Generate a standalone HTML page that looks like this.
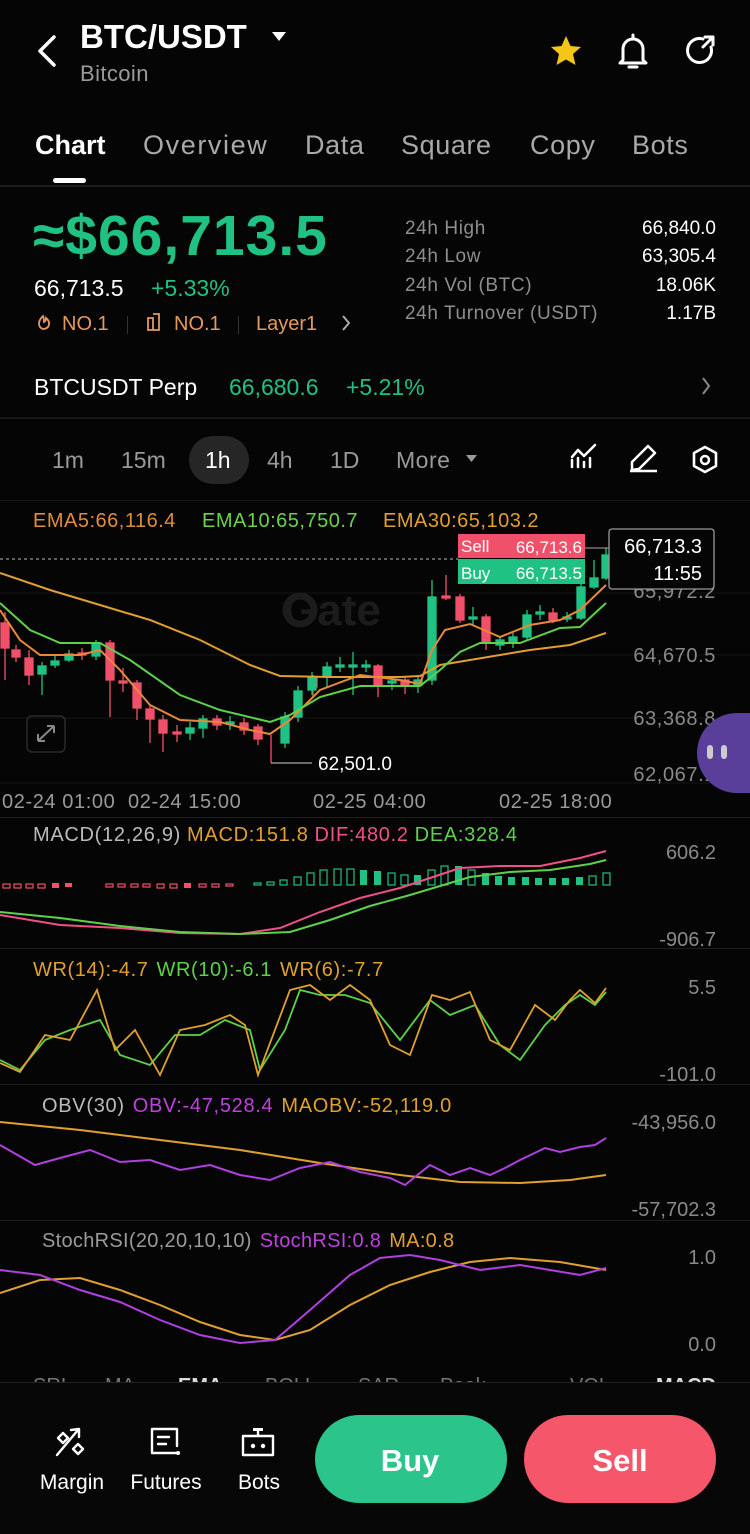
<!DOCTYPE html>
<html><head><meta charset="utf-8"><style>
html,body{margin:0;padding:0;background:#050505;width:750px;height:1534px;overflow:hidden}
svg{display:block}
text{font-family:"Liberation Sans",sans-serif}
</style></head><body>
<svg width="750" height="1534" viewBox="0 0 750 1534" xmlns="http://www.w3.org/2000/svg">
<rect width="750" height="1534" fill="#050505"/>
<!-- header -->
<path d="M54 37 L40 51 L54 65" stroke="#fff" stroke-width="3.5" fill="none" stroke-linecap="round" stroke-linejoin="round"/>
<text x="80" y="48" fill="#fff" font-size="33" font-weight="bold">BTC/USDT</text>
<path d="M272 32 L286 32 L279 41 Z" fill="#fff"/>
<text x="80" y="81" fill="#9a9a9a" font-size="22" letter-spacing="0.4">Bitcoin</text>
<path d="M566 36 L570.5 46 L581 47 L573 54 L575.5 65 L566 59.5 L556.5 65 L559 54 L551 47 L561.5 46 Z" fill="#f5c518"/>
<path d="M623 60 L623 49 A10 10 0 0 1 643 49 L643 60 L646 63 L620 63 Z M629 67 L637 67" stroke="#fff" stroke-width="3" fill="none" stroke-linejoin="round" stroke-linecap="round"/>
<line x1="633" y1="35" x2="633" y2="38" stroke="#fff" stroke-width="3" stroke-linecap="round"/>
<path d="M711 47 A12 12 0 1 1 703 39" stroke="#fff" stroke-width="3" fill="none" stroke-linecap="round"/>
<path d="M703 47 L713 37 M705 37 L713 37 L713 45" stroke="#fff" stroke-width="3" fill="none" stroke-linecap="round" stroke-linejoin="round"/>
<!-- tabs -->
<g font-size="27" fill="#a9a9a9" letter-spacing="0.6">
<text x="35" y="154" fill="#fff" font-weight="bold" letter-spacing="0">Chart</text>
<text x="143" y="154" letter-spacing="1.6">Overview</text>
<text x="305" y="154">Data</text>
<text x="401" y="154">Square</text>
<text x="530" y="154">Copy</text>
<text x="632" y="154">Bots</text>
</g>
<rect x="53" y="178" width="33" height="5" rx="2.5" fill="#fff"/>
<rect x="0" y="185" width="750" height="2" fill="#1c1c1c"/>
<!-- price -->
<text x="33" y="255" fill="#1fc283" font-size="57" font-weight="bold" letter-spacing="1">≈$66,713.5</text>
<text x="34" y="296" fill="#fff" font-size="23">66,713.5</text>
<text x="151" y="296" fill="#1fc283" font-size="23">+5.33%</text>
<g fill="#e39a5c" font-size="20">
<path d="M43 316 q-6 6 -3 11 q3 4 8 0 q3 -5 -2 -9 q0 3 -2 4 q0 -4 -1 -6z" stroke="#e39a5c" stroke-width="1.8" fill="none"/>
<text x="62" y="330">NO.1</text>
<rect x="127" y="316" width="1" height="18" fill="#333"/>
<path d="M148 318 h5 v12 h-5 z M153 314 h6 v16 h-6" stroke="#e39a5c" stroke-width="1.8" fill="none"/>
<text x="174" y="330">NO.1</text>
<rect x="238" y="316" width="1" height="18" fill="#333"/>
<text x="256" y="330">Layer1</text>
</g>
<path d="M343 316 L349 323 L343 330" stroke="#aaa" stroke-width="2" fill="none"/>
<g font-size="19" fill="#8e8e8e" letter-spacing="0.6">
<text x="405" y="234">24h  High</text>
<text x="405" y="262">24h  Low</text>
<text x="405" y="291">24h  Vol (BTC)</text>
<text x="405" y="319">24h  Turnover (USDT)</text>
</g>
<g font-size="19" fill="#fff" text-anchor="end">
<text x="716" y="234">66,840.0</text>
<text x="716" y="262">63,305.4</text>
<text x="716" y="291">18.06K</text>
<text x="716" y="319">1.17B</text>
</g>
<text x="34" y="395" fill="#fff" font-size="23">BTCUSDT Perp</text>
<text x="229" y="395" fill="#1fc283" font-size="23">66,680.6</text>
<text x="346" y="395" fill="#1fc283" font-size="23">+5.21%</text>
<path d="M703 378 L709 386 L703 394" stroke="#888" stroke-width="2" fill="none"/>
<rect x="0" y="417" width="750" height="2" fill="#161616"/>
<!-- timeframe -->
<rect x="189" y="436" width="60" height="48" rx="24" fill="#262626"/>
<g font-size="23" fill="#9a9a9a">
<text x="52" y="468">1m</text>
<text x="121" y="468">15m</text>
<text x="205" y="468" fill="#fff">1h</text>
<text x="267" y="468">4h</text>
<text x="330" y="468">1D</text>
<text x="396" y="468" letter-spacing="0.5">More</text>
</g>
<path d="M466 455 L477 455 L471.5 462 Z" fill="#9a9a9a"/>
<path d="M572 467 L572 460 M578 467 L578 458 M584 467 L584 462 M590 467 L590 458 M572 457 L578 450 L584 456 L595 445" stroke="#fff" stroke-width="2.5" fill="none" stroke-linecap="round" stroke-linejoin="round"/>
<path d="M632 470 L632 462 L648 446 L655 453 L639 469 Z M630 471 L657 471" stroke="#fff" stroke-width="2.5" fill="none" stroke-linejoin="round"/>
<path d="M705 447 L716 453 L716 466 L705 472 L694 466 L694 453 Z" stroke="#fff" stroke-width="2.6" fill="none" stroke-linejoin="round"/>
<circle cx="705" cy="460" r="4" stroke="#fff" stroke-width="2.5" fill="none"/>
<rect x="0" y="500" width="750" height="1" fill="#161616"/>
<!-- main chart -->
<g stroke="#151515" stroke-width="1">
<line x1="0" y1="593" x2="750" y2="593"/><line x1="0" y1="655" x2="750" y2="655"/><line x1="0" y1="718" x2="750" y2="718"/><line x1="0" y1="783" x2="750" y2="783"/>
</g>
<text x="283" y="625" fill="#1c1c1c" font-size="44" font-weight="bold">Gate</text>
<circle cx="300" cy="610" r="14" stroke="#1c1c1c" stroke-width="7" fill="none"/>
<g font-size="20" letter-spacing="0.5">
<text x="33" y="527" fill="#e08c3c">EMA5:66,116.4</text>
<text x="202" y="527" fill="#6bd24a">EMA10:65,750.7</text>
<text x="383" y="527" fill="#e0a030">EMA30:65,103.2</text>
</g>
<g font-size="20" fill="#8a8a8a" text-anchor="end" letter-spacing="0.6">
<text x="716" y="598">65,972.2</text>
<text x="716" y="662">64,670.5</text>
<text x="716" y="725">63,368.8</text>
<text x="716" y="781">62,067.1</text>
</g>
<g font-size="20" fill="#9a9a9a" letter-spacing="0.6">
<text x="2" y="808">02-24 01:00</text>
<text x="128" y="808">02-24 15:00</text>
<text x="313" y="808">02-25 04:00</text>
<text x="499" y="808">02-25 18:00</text>
</g>
<line x1="0" y1="559" x2="458" y2="559" stroke="#bbb" stroke-width="1" stroke-dasharray="3,3"/>
<!-- candles -->
<g stroke-width="1.3">
<g fill="#f0506a" stroke="#f0506a">
<line x1="5" y1="612" x2="5" y2="680"/><rect x="1" y="623" width="8" height="25"/>
<line x1="16" y1="645" x2="16" y2="662"/><rect x="12" y="650" width="8" height="7"/>
<line x1="29" y1="650" x2="29" y2="685"/><rect x="25" y="658" width="8" height="17"/>
<line x1="82" y1="648" x2="82" y2="660"/><rect x="78" y="653" width="8" height="2"/>
<line x1="110" y1="640" x2="110" y2="717"/><rect x="106" y="643" width="8" height="37"/>
<line x1="123" y1="668" x2="123" y2="692"/><rect x="119" y="681" width="8" height="2"/>
<line x1="137" y1="680" x2="137" y2="720"/><rect x="133" y="683" width="8" height="25"/>
<line x1="150" y1="705" x2="150" y2="743"/><rect x="146" y="709" width="8" height="10"/>
<line x1="163" y1="715" x2="163" y2="752"/><rect x="159" y="720" width="8" height="13"/>
<line x1="177" y1="725" x2="177" y2="742"/><rect x="173" y="732" width="8" height="2"/>
<line x1="217" y1="715" x2="217" y2="730"/><rect x="213" y="719" width="8" height="6"/>
<line x1="244" y1="718" x2="244" y2="735"/><rect x="240" y="723" width="8" height="7"/>
<line x1="258" y1="724" x2="258" y2="745"/><rect x="254" y="727" width="8" height="12"/>
<line x1="271" y1="735" x2="271" y2="763"/>
<line x1="313" y1="675" x2="313" y2="698"/><rect x="309" y="677" width="8" height="10"/>
<line x1="378" y1="664" x2="378" y2="697"/><rect x="374" y="666" width="8" height="19"/>
<line x1="405" y1="676" x2="405" y2="694"/><rect x="401" y="680" width="8" height="5"/>
<line x1="446" y1="575" x2="446" y2="600"/><rect x="442" y="596" width="8" height="2"/>
<line x1="460" y1="594" x2="460" y2="623"/><rect x="456" y="597" width="8" height="23"/>
<line x1="486" y1="614" x2="486" y2="650"/><rect x="482" y="617" width="8" height="26"/>
<line x1="553" y1="608" x2="553" y2="623"/><rect x="549" y="613" width="8" height="7"/>
</g>
<line x1="271" y1="763" x2="312" y2="763" stroke="#aaa" stroke-width="1.3"/>
<g fill="#1fc283" stroke="#1fc283">
<line x1="42" y1="662" x2="42" y2="695"/><rect x="38" y="666" width="8" height="8"/>
<line x1="55" y1="656" x2="55" y2="668"/><rect x="51" y="661" width="8" height="4"/>
<line x1="69" y1="650" x2="69" y2="662"/><rect x="65" y="654" width="8" height="6"/>
<line x1="96" y1="640" x2="96" y2="660"/><rect x="92" y="643" width="8" height="13"/>
<line x1="190" y1="722" x2="190" y2="740"/><rect x="186" y="728" width="8" height="5"/>
<line x1="203" y1="715" x2="203" y2="738"/><rect x="199" y="719" width="8" height="9"/>
<line x1="230" y1="716" x2="230" y2="730"/><rect x="226" y="722" width="8" height="2"/>
<line x1="285" y1="712" x2="285" y2="748"/><rect x="281" y="717" width="8" height="26"/>
<line x1="298" y1="686" x2="298" y2="722"/><rect x="294" y="691" width="8" height="26"/>
<line x1="312" y1="672" x2="312" y2="695"/><rect x="308" y="677" width="8" height="13"/>
<line x1="327" y1="662" x2="327" y2="688"/><rect x="323" y="667" width="8" height="10"/>
<line x1="340" y1="657" x2="340" y2="672"/><rect x="336" y="665" width="8" height="2"/>
<line x1="353" y1="652" x2="353" y2="695"/><rect x="349" y="665" width="8" height="2"/>
<line x1="366" y1="660" x2="366" y2="672"/><rect x="362" y="665" width="8" height="2"/>
<line x1="392" y1="676" x2="392" y2="690"/><rect x="388" y="681" width="8" height="2"/>
<line x1="418" y1="675" x2="418" y2="693"/><rect x="414" y="680" width="8" height="5"/>
<line x1="432" y1="580" x2="432" y2="685"/><rect x="428" y="597" width="8" height="83"/>
<line x1="473" y1="607" x2="473" y2="625"/><rect x="469" y="617" width="8" height="2"/>
<line x1="500" y1="636" x2="500" y2="650"/><rect x="496" y="640" width="8" height="5"/>
<line x1="513" y1="633" x2="513" y2="648"/><rect x="509" y="637" width="8" height="6"/>
<line x1="527" y1="610" x2="527" y2="640"/><rect x="523" y="615" width="8" height="22"/>
<line x1="540" y1="605" x2="540" y2="620"/><rect x="536" y="612" width="8" height="2"/>
<line x1="567" y1="612" x2="567" y2="622"/><rect x="563" y="617" width="8" height="2"/>
<line x1="581" y1="583" x2="581" y2="620"/><rect x="577" y="587" width="8" height="31"/>
<line x1="594" y1="560" x2="594" y2="589"/><rect x="590" y="578" width="8" height="9"/>
<line x1="606" y1="548" x2="606" y2="580"/><rect x="602" y="555" width="8" height="23"/>
</g>
</g>
<g fill="none" stroke-width="2">
<polyline stroke="#e0a030" points="0,573 50,590 100,605 150,620 200,640 250,665 280,676 330,677 400,677 420,676 440,665 470,660 530,650 570,645 606,633"/>
<polyline stroke="#e8883a" points="0,610 20,640 40,655 80,655 100,650 120,670 150,705 180,720 220,722 250,730 270,734 290,720 320,690 360,675 400,680 420,684 432,650 445,630 470,624 500,637 530,625 560,620 580,610 606,585"/>
<polyline stroke="#5ed14a" points="0,603 30,630 60,643 100,643 130,660 180,695 220,710 270,722 290,715 320,697 360,686 420,686 440,670 460,652 480,643 520,643 560,628 580,627 606,603"/>
</g>
<text x="318" y="770" fill="#fff" font-size="19">62,501.0</text>
<rect x="27" y="716" width="38" height="36" rx="5" fill="none" stroke="#2a2a2a" stroke-width="1.5"/>
<path d="M38 741 L54 726 M38 741 L38 734 M38 741 L45 741 M54 726 L47 726 M54 726 L54 733" stroke="#888" stroke-width="2" fill="none"/>
<rect x="458" y="534" width="127" height="24" fill="#f0506a"/>
<rect x="458" y="559" width="127" height="25" fill="#1fc283"/>
<text x="461" y="552" fill="#fff" font-size="17">Sell</text><text x="582" y="553" fill="#fff" font-size="17" text-anchor="end">66,713.6</text>
<text x="461" y="579" fill="#fff" font-size="17">Buy</text><text x="582" y="579" fill="#fff" font-size="17" text-anchor="end">66,713.5</text>
<line x1="585" y1="548" x2="609" y2="548" stroke="#aaa"/>
<rect x="609" y="529" width="105" height="60" rx="3" fill="#050505" stroke="#999" stroke-width="1.3"/>
<text x="702" y="553" fill="#fff" font-size="20" text-anchor="end">66,713.3</text>
<text x="702" y="580" fill="#fff" font-size="20" text-anchor="end">11:55</text>
<path d="M750 713 L737 713 A40 40 0 0 0 737 793 L750 793 Z" fill="#5a3f9a"/>
<rect x="707" y="745" width="6" height="14" rx="3" fill="#ccc"/><rect x="721" y="745" width="6" height="14" rx="3" fill="#ccc"/>
<!-- MACD -->
<rect x="0" y="817" width="750" height="1" fill="#1e1e1e"/>
<text x="33" y="841" font-size="20" letter-spacing="0.7"><tspan fill="#bbb">MACD(12,26,9)</tspan><tspan fill="#e0a030" dx="6">MACD:151.8</tspan><tspan fill="#f0508a" dx="6">DIF:480.2</tspan><tspan fill="#5ed14a" dx="6">DEA:328.4</tspan></text>
<text x="716" y="859" fill="#8a8a8a" font-size="20" text-anchor="end">606.2</text>
<text x="716" y="946" fill="#8a8a8a" font-size="20" text-anchor="end">-906.7</text>
<g stroke="#f0506a" stroke-width="1.2" fill="none">
<rect x="3" y="884" width="7" height="4"/><rect x="14" y="884" width="7" height="4"/><rect x="26" y="884" width="7" height="4"/><rect x="38" y="884" width="7" height="4"/>
<rect x="106" y="884" width="7" height="3"/><rect x="118" y="884" width="7" height="3"/><rect x="131" y="884" width="7" height="3"/><rect x="143" y="884" width="7" height="3"/>
<rect x="157" y="884" width="7" height="4"/><rect x="170" y="884" width="7" height="4"/><rect x="199" y="884" width="7" height="3"/><rect x="212" y="884" width="7" height="3"/><rect x="226" y="884" width="7" height="2"/>
</g>
<g fill="#f0506a"><rect x="52" y="883" width="7" height="5"/><rect x="65" y="883" width="7" height="4"/><rect x="184" y="883" width="7" height="5"/></g>
<g stroke="#1fc283" stroke-width="1.2" fill="none">
<rect x="254" y="883" width="7" height="2"/><rect x="267" y="882" width="7" height="3"/><rect x="280" y="880" width="7" height="5"/><rect x="294" y="877" width="7" height="8"/><rect x="307" y="873" width="7" height="12"/><rect x="320" y="870" width="7" height="15"/><rect x="334" y="869" width="7" height="16"/><rect x="347" y="869" width="7" height="16"/><rect x="388" y="873" width="7" height="12"/><rect x="401" y="875" width="7" height="10"/><rect x="428" y="870" width="7" height="15"/><rect x="441" y="866" width="7" height="19"/><rect x="468" y="870" width="7" height="15"/><rect x="589" y="876" width="7" height="9"/><rect x="603" y="873" width="7" height="12"/>
</g>
<g fill="#1fc283"><rect x="360" y="870" width="7" height="15"/><rect x="374" y="871" width="7" height="14"/><rect x="414" y="875" width="7" height="10"/><rect x="455" y="866" width="7" height="19"/><rect x="482" y="873" width="7" height="12"/><rect x="495" y="876" width="7" height="9"/><rect x="508" y="877" width="7" height="8"/><rect x="522" y="877" width="7" height="8"/><rect x="535" y="878" width="7" height="7"/><rect x="549" y="878" width="7" height="7"/><rect x="562" y="878" width="7" height="7"/><rect x="576" y="877" width="7" height="8"/></g>
<g fill="none" stroke-width="2">
<polyline stroke="#f0508a" points="0,915 60,925 120,928 180,933 240,934 280,928 320,912 360,898 400,888 430,878 460,868 500,866 540,866 580,858 606,851"/>
<polyline stroke="#5ed14a" points="0,912 60,918 120,926 180,932 240,934 290,932 330,920 370,906 410,895 440,886 470,877 510,872 550,870 590,864 606,860"/>
</g>
<!-- WR -->
<rect x="0" y="948" width="750" height="1" fill="#1e1e1e"/>
<text x="33" y="976" font-size="20" letter-spacing="0.6"><tspan fill="#e0a030">WR(14):-4.7</tspan><tspan fill="#5ed14a" dx="8">WR(10):-6.1</tspan><tspan fill="#e0a030" dx="8">WR(6):-7.7</tspan></text>
<text x="716" y="994" fill="#8a8a8a" font-size="20" text-anchor="end">5.5</text>
<text x="716" y="1081" fill="#8a8a8a" font-size="20" text-anchor="end">-101.0</text>
<g fill="none" stroke-width="1.8">
<polyline stroke="#5ed14a" points="0,1060 20,1070 45,1040 70,1030 100,1020 120,1055 150,1065 175,1035 200,1035 225,1020 250,1030 260,1070 285,1030 300,990 320,995 345,995 370,1003 400,1040 430,1000 450,1015 475,1005 500,1045 520,1060 545,1025 565,1005 580,995 595,1005 606,992"/>
<polyline stroke="#e0a030" points="0,1063 20,1072 45,1035 70,1040 97,990 115,1050 135,1030 160,1075 180,1030 205,1025 230,1015 245,1025 258,1075 290,990 310,985 330,1000 350,985 370,1000 390,1045 410,1055 432,995 450,1000 470,992 490,1040 510,1050 535,1005 555,1020 570,1000 580,990 595,1003 606,988"/>
</g>
<!-- OBV -->
<rect x="0" y="1084" width="750" height="1" fill="#1e1e1e"/>
<text x="42" y="1112" font-size="20" letter-spacing="0.7"><tspan fill="#bbb">OBV(30)</tspan><tspan fill="#c040e0" dx="8">OBV:-47,528.4</tspan><tspan fill="#e0a030" dx="8">MAOBV:-52,119.0</tspan></text>
<text x="716" y="1129" fill="#8a8a8a" font-size="20" text-anchor="end">-43,956.0</text>
<text x="716" y="1216" fill="#8a8a8a" font-size="20" text-anchor="end">-57,702.3</text>
<g fill="none" stroke-width="2">
<polyline stroke="#e0a030" points="0,1122 80,1130 160,1140 240,1150 320,1163 400,1175 460,1182 520,1183 570,1180 606,1175"/>
<polyline stroke="#b040e0" points="0,1145 35,1165 60,1158 90,1150 120,1162 150,1160 180,1170 210,1165 240,1175 270,1180 300,1168 330,1162 360,1172 390,1178 405,1185 430,1165 450,1175 470,1168 490,1175 505,1168 520,1160 545,1148 560,1152 580,1147 595,1145 606,1138"/>
</g>
<!-- StochRSI -->
<rect x="0" y="1220" width="750" height="1" fill="#1e1e1e"/>
<text x="42" y="1247" font-size="20" letter-spacing="0.3"><tspan fill="#9a9a9a">StochRSI(20,20,10,10)</tspan><tspan fill="#c040e0" dx="8">StochRSI:0.8</tspan><tspan fill="#e0a030" dx="8">MA:0.8</tspan></text>
<text x="716" y="1264" fill="#8a8a8a" font-size="20" text-anchor="end">1.0</text>
<text x="716" y="1351" fill="#8a8a8a" font-size="20" text-anchor="end">0.0</text>
<g fill="none" stroke-width="2">
<polyline stroke="#e0a030" points="0,1293 40,1280 80,1278 120,1290 160,1305 200,1322 240,1335 275,1340 310,1330 350,1305 390,1285 430,1272 470,1262 510,1258 560,1262 606,1270"/>
<polyline stroke="#b040e0" points="0,1270 40,1275 80,1290 120,1302 160,1320 200,1335 240,1343 275,1340 310,1310 350,1275 380,1258 410,1255 440,1260 480,1270 520,1265 550,1270 580,1275 606,1268"/>
</g>
<!-- indicator tab row (cut) -->
<g font-size="20" fill="#777">
<text x="33" y="1392">SRI</text><text x="105" y="1392">MA</text><text x="178" y="1392" fill="#ddd" font-weight="bold">EMA</text><text x="265" y="1392">BOLL</text><text x="358" y="1392">SAR</text><text x="440" y="1392">Peak</text><text x="570" y="1392">VOL</text><text x="656" y="1392" fill="#ddd" font-weight="bold">MACD</text>
</g>
<rect x="0" y="1382" width="750" height="152" fill="#070707"/>
<rect x="0" y="1382" width="750" height="1" fill="#222"/>
<!-- bottom -->
<g stroke="#fff" stroke-width="2.4" fill="none" stroke-linejoin="round" stroke-linecap="round">
<path d="M57 1455 L78 1430 M71 1430 L79 1429 L79 1437"/>
<path d="M63 1433 L68 1438 L63 1443 L58 1438 Z M78 1444 L83 1449 L78 1454 L73 1449 Z"/>
<path d="M179 1453 L152 1453 L152 1429 L177 1429 L177 1446 M158 1437 L169 1437 M158 1444 L166 1444"/>
<path d="M243 1436 L273 1436 L273 1455 L243 1455 Z M258 1430 L258 1436"/>
</g>
<circle cx="178" cy="1453" r="2" fill="#fff"/>
<rect x="253" y="1428" width="10" height="3" fill="#fff"/>
<circle cx="253" cy="1446" r="2.2" fill="#fff"/><circle cx="263" cy="1446" r="2.2" fill="#fff"/>
<g font-size="21" fill="#fff" text-anchor="middle">
<text x="72" y="1489">Margin</text><text x="166" y="1489">Futures</text><text x="259" y="1489">Bots</text>
</g>
<rect x="315" y="1415" width="192" height="88" rx="44" fill="#2bc48a"/>
<rect x="524" y="1415" width="192" height="88" rx="44" fill="#f5566a"/>
<text x="410" y="1471" fill="#fff" font-size="31" font-weight="bold" text-anchor="middle">Buy</text>
<text x="620" y="1471" fill="#fff" font-size="31" font-weight="bold" text-anchor="middle">Sell</text>
</svg>
</body></html>
